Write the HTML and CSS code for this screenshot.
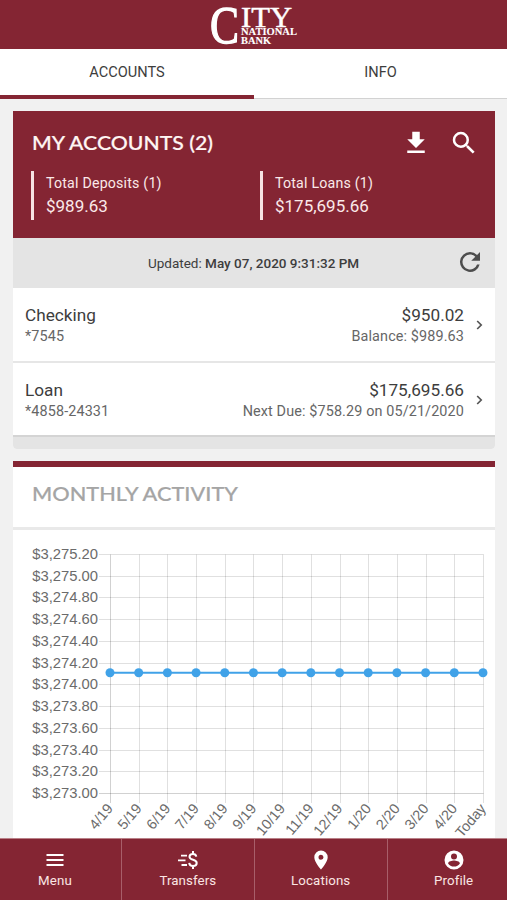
FILE: index.html
```html
<!DOCTYPE html>
<html lang="en">
<head>
<meta charset="utf-8">
<title>City National Bank</title>
<link rel="stylesheet" href="styles.css">
</head>
<body>
<header class="brand">
  <svg width="90" height="43" viewBox="0 0 90 43" role="img" aria-label="City National Bank">
    <g class="logo-text">
      <text class="logo-cap" x="0" y="38" font-size="53" textLength="29" lengthAdjust="spacingAndGlyphs">C</text>
      <text x="31" y="21.500" font-size="29" textLength="51" lengthAdjust="spacingAndGlyphs">ITY</text>
      <text class="logo-small" x="31" y="30" font-size="9.500" textLength="56" lengthAdjust="spacingAndGlyphs">NATIONAL</text>
      <text class="logo-small" x="31" y="38.700" font-size="9.500" textLength="30" lengthAdjust="spacingAndGlyphs">BANK</text>
    </g>
  </svg>
</header>
<nav class="tabs">
  <a class="tab active"><span>ACCOUNTS</span></a>
  <a class="tab"><span>INFO</span></a>
</nav>
<main class="content">
  <section class="accounts">
    <div class="summary">
      <div class="summary-top">
        <svg class="title" width="190" height="30"><text x="0" y="22" font-size="19.500" textLength="181" lengthAdjust="spacingAndGlyphs">MY ACCOUNTS (2)</text></svg>
        <div class="actions">
          <svg width="30" height="30" viewBox="0 0 24 24"><path d="M19 9h-4V3H9v6H5l7 7 7-7zM5 18v2h14v-2H5z"/></svg>
          <svg width="30" height="30" viewBox="0 0 24 24"><path d="M15.5 14h-.79l-.28-.27A6.47 6.47 0 0 0 16 9.5 6.5 6.5 0 1 0 9.500 16c1.610 0 3.090-.59 4.230-1.570l.27.28v.79l5 4.990L20.490 19l-4.990-5zm-6 0a4.500 4.500 0 1 1 0-9 4.500 4.500 0 0 1 0 9z"/></svg>
        </div>
      </div>
      <div class="totals">
        <div class="total"><span>Total Deposits (1)</span><b>$989.63</b></div>
        <div class="total"><span>Total Loans (1)</span><b>$175,695.66</b></div>
      </div>
    </div>
    <div class="updated">
      <p>Updated: <b>May 07, 2020 9:31:32 PM</b></p>
      <svg width="30" height="30" viewBox="0 0 24 24"><path d="M17.650 6.350A7.950 7.950 0 0 0 12 4a8 8 0 1 0 7.730 10h-2.080A6 6 0 1 1 12 6c1.660 0 3.140.69 4.220 1.780L13 11h7V4l-2.350 2.350z"/></svg>
    </div>
    <a class="row">
      <div class="name"><b>Checking</b><span>*7545</span></div>
      <div class="amount"><b>$950.02</b><span>Balance: $989.63</span></div>
      <svg width="7" height="10" viewBox="0 0 7 10"><path d="M1.200 1l4 4-4 4"/></svg>
    </a>
    <a class="row last">
      <div class="name"><b>Loan</b><span>*4858-24331</span></div>
      <div class="amount"><b>$175,695.66</b><span>Next Due: $758.29 on 05/21/2020</span></div>
      <svg width="7" height="10" viewBox="0 0 7 10"><path d="M1.200 1l4 4-4 4"/></svg>
    </a>
    <div class="card-foot"></div>
  </section>
  <section class="activity">
    <div class="activity-head">
      <svg class="title" width="215" height="30"><text x="0" y="22" font-size="19.500" textLength="206" lengthAdjust="spacingAndGlyphs">MONTHLY ACTIVITY</text></svg>
    </div>
    <svg class="chart" id="chart" width="482" height="308" viewBox="13 530 482 308"></svg>
  </section>
</main>
<nav class="bottom">
  <a><svg width="24" height="24" viewBox="0 0 24 24"><path d="M3.500 6h17v2h-17zm0 5h17v2h-17zm0 5h17v2h-17z"/></svg><span>Menu</span></a>
  <a><svg width="24" height="24" viewBox="0 0 24 24"><path d="M5 6.700h6v1.900H5zm-3 4.700h7.500v1.900H2zm3.500 4.700h5.500V18H5.500z"/><path class="dollar" d="M20.300 8.600C20 6.900 18.700 6 16.900 6c-2 0-3.400 1.100-3.400 2.800 0 4 7.200 2 7.200 6.100 0 1.900-1.500 3.100-3.700 3.100-2.100 0-3.600-1.200-3.800-3.200M17 3v3m0 12v3"/></svg><span>Transfers</span></a>
  <a><svg width="24" height="24" viewBox="0 0 24 24"><path d="M12 2.500a6.700 6.700 0 0 0-6.700 6.700c0 5 6.700 12.300 6.700 12.300s6.700-7.300 6.700-12.300A6.700 6.700 0 0 0 12 2.500zm0 9.200a2.500 2.500 0 1 1 0-5 2.500 2.500 0 0 1 0 5z"/></svg><span>Locations</span></a>
  <a><svg width="24" height="24" viewBox="0 0 24 24"><path fill-rule="evenodd" d="M12 2.500a9.500 9.500 0 1 0 0 19 9.500 9.500 0 0 0 0-19zM12 5.500a3 3 0 1 1 0 6 3 3 0 0 1 0-6zM12 18.500c-2.600 0-4.700-1.200-5.900-3.100.1-1.800 3.900-2.800 5.900-2.800s5.800 1 5.900 2.800c-1.200 1.900-3.300 3.100-5.900 3.100z"/></svg><span>Profile</span></a>
</nav>
<script src="chart.js"></script>
</body>
</html>
```
FILE: styles.css
```css
* { box-sizing: border-box; }
body {
  margin: 0;
  height: 900px;
  display: flex;
  flex-direction: column;
  overflow: hidden;
  background: #f1f1f1;
  color: #3d3d3d;
  font-family: Roboto, sans-serif;
}
b { font-weight: 400; }
p { margin: 0; }
.brand {
  flex: none;
  height: 49px;
  padding: 5px 0 0 210px;
  background: #842533;
}
.brand svg { display: block; overflow: visible; }
.logo-text { fill: #fff; font-family: "Liberation Serif", serif; stroke: #fff; stroke-width: .5; }
.logo-cap { stroke-width: 1.300; }
.logo-small { font-weight: 700; stroke-width: .1; }
.tabs { flex: none; display: flex; height: 50px; background: #fff; }
.tab {
  width: 253px;
  padding-top: 13px;
  border-bottom: 1px solid #d2d2d2;
  text-align: center;
  font-size: 14.600px;
  line-height: 20px;
}
.tab.active { width: 254px; border-bottom: 4px solid #842533; }
.content { flex: 1; min-height: 0; padding: 12px 12px 0 13px; }
.accounts { height: 338px; margin-bottom: 12px; border-radius: 0 0 4px 4px; overflow: hidden; background: #fff; }
.summary { height: 127px; padding: 17px 16px 0 18px; background: #842533; color: #fbe9e9; }
.summary-top { display: flex; justify-content: space-between; height: 43px; padding-left: 1px; }
.title { display: block; overflow: visible; font-family: Lato, sans-serif; font-weight: 500; }
.title text { fill: #fff6f4; stroke: #fff6f4; stroke-width: .2; }
.actions { display: flex; gap: 18px; fill: #fff; }
.totals { display: flex; }
.total {
  flex: none;
  width: 229px;
  height: 49px;
  padding: 2px 0 0 12px;
  border-left: 3px solid #f6e3e3;
  font-size: 14.200px;
  line-height: 21px;
  letter-spacing: .2px;
}
.total:last-child { width: 200px; }
.total span, .total b { display: block; }
.total b { font-size: 17px; line-height: 25px; letter-spacing: 0; }
.updated {
  display: flex;
  align-items: center;
  height: 50px;
  padding: 0 10px 2px 135px;
  background: #e4e4e4;
  font-size: 13.500px;
  justify-content: space-between;
}
.updated p { padding-top: 2px; }
.updated b { font-weight: 500; }
.updated svg { fill: #4d4d4d; }
.row {
  display: flex;
  height: 75px;
  padding: 16px 12px 0 12px;
  border-bottom: 2px solid #e6e6e6;
}
.row.last { height: 74px; border-color: #d4d4d4; }
.row b, .row span { display: block; white-space: nowrap; }
.row b { font-size: 17.200px; line-height: 22px; }
.row span { color: #666; font-size: 14.400px; line-height: 21px; letter-spacing: .12px; }
.amount { margin-left: auto; text-align: right; }
.row svg { margin: 16px 0 0 12px; fill: none; stroke: #555; stroke-width: 1.700; }
.card-foot { height: 12px; background: #e4e4e4; }
.activity { background: #fff; border-top: 6px solid #842533; }
.activity-head { height: 63px; padding: 12px 19px 0; border-bottom: 3px solid #e9e9e9; }
.activity .title text { fill: #a5a5a5; stroke: #a5a5a5; }
.chart { display: block; font-family: "Liberation Sans", sans-serif; font-size: 14.800px; fill: #6b6b6b; }
.grid { stroke: #000; stroke-opacity: .12; fill: none; }
.axis { stroke: #000; stroke-opacity: .18; fill: none; }
.series { stroke: #40a2e8; stroke-width: 2; }
.dot { fill: #40a2e8; }
.bottom {
  flex: none;
  display: grid;
  grid-template-columns: repeat(4, 132.900px);
  height: 62px;
  margin-left: -11px;
  background: #842533;
  border-top: 1px solid #b98087;
}
.bottom a {
  display: flex;
  flex-direction: column;
  align-items: center;
  padding-top: 9px;
  border-right: 1px solid #a85e69;
  color: #fbe5e4;
  font-size: 13.300px;
  line-height: 18px;
  letter-spacing: .1px;
}
.bottom svg { display: block; fill: #fff; }
.bottom .dollar { fill: none; stroke: #fff; stroke-width: 2; }
```
FILE: chart.js
```js
const months = ["4/19", "5/19", "6/19", "7/19", "8/19", "9/19", "10/19", "11/19", "12/19", "1/20", "2/20", "3/20", "4/20", "Today"];
const left = 110.5, right = 483.5, top0 = 554.5, bottom = 793.5;
const parts = [];
for (let i = 0; i < 12; i++) {
  const y = Math.round(top0 + i * (bottom - top0) / 11 - .5) + .5;
  parts.push(`<path class="${i === 11 ? "axis" : "grid"}" d="M99 ${y}H${right}"/>`);
  parts.push(`<text x="98" y="${y + 4.5}" text-anchor="end">$3,${(275.2 - i * 0.2).toFixed(2)}</text>`);
}
months.forEach((m, i) => {
  const cx = left + i * (right - left) / 13;
  const x = Math.round(cx - .5) + .5;
  parts.push(`<path class="${i ? "grid" : "axis"}" d="M${x} ${top0}V803"/>`);
  parts.push(`<text transform="translate(${cx - 4.5} 802.5) rotate(-50)" x="0" y="10" font-size="14.4" text-anchor="end">${m}</text>`);
});
parts.push(`<path class="series" d="M110 672.700H483"/>`);
months.forEach((m, i) => {
  parts.push(`<circle class="dot" cx="${110 + i * 28.69}" cy="672.700" r="4.500"/>`);
});
document.getElementById("chart").innerHTML = parts.join("");
```
